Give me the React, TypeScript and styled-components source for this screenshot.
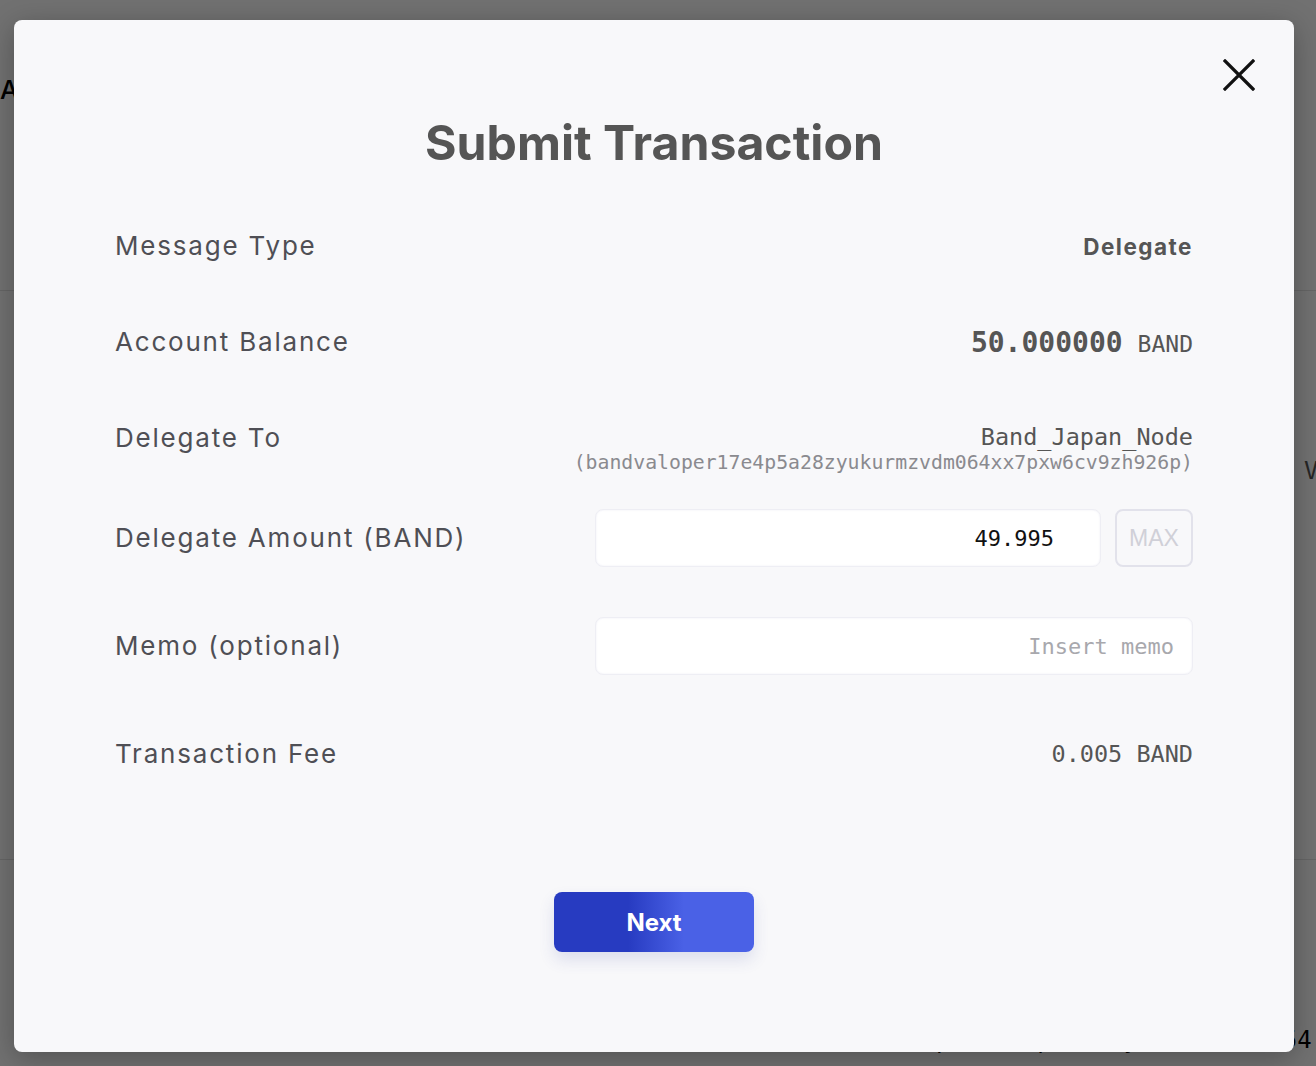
import React from "react";
import styled, { createGlobalStyle } from "styled-components";

const GlobalStyle = createGlobalStyle`
  html, body {
    margin: 0;
    padding: 0;
  }
  body {
    font-family: Inter, "Noto Sans", sans-serif;
    background: #ffffff;
    overflow: hidden;
  }
  * {
    box-sizing: border-box;
  }
`;

interface RowProps {
  $h: number;
  $top?: boolean;
}

interface SectionProps {
  $h: number;
}

function CloseIcon(): JSX.Element {
  return (
    <svg width="32" height="32" viewBox="0 0 32 32" fill="none">
      <path
        d="M2 2L30 30M30 2L2 30"
        stroke="#111111"
        strokeWidth="3.2"
        strokeLinecap="square"
      />
    </svg>
  );
}

function App(): JSX.Element {
  return (
    <>
      <GlobalStyle />
      <Page>
        <PageHeading>Accounts</PageHeading>
        <PageSection $h={569}>
          <PageLine>Voting Power</PageLine>
        </PageSection>
        <PageSection $h={260}>
          <PageFooterLine>{"p      p     y          54"}</PageFooterLine>
        </PageSection>

        <Overlay>
          <Modal>
            <CloseButton aria-label="Close">
              <CloseIcon />
            </CloseButton>
            <Title>Submit Transaction</Title>

            <Rows>
              <Row $h={96}>
                <Label>Message Type</Label>
                <TypeValue>Delegate</TypeValue>
              </Row>

              <Row $h={96}>
                <Label>Account Balance</Label>
                <Balance>
                  <Amount>50.000000</Amount>
                  <Unit>BAND</Unit>
                </Balance>
              </Row>

              <Row $h={100} $top>
                <Label>Delegate To</Label>
                <Validator>
                  <ValidatorName>Band_Japan_Node</ValidatorName>
                  <ValidatorAddress>
                    (bandvaloper17e4p5a28zyukurmzvdm064xx7pxw6cv9zh926p)
                  </ValidatorAddress>
                </Validator>
              </Row>

              <Row $h={96}>
                <Label>Delegate Amount (BAND)</Label>
                <InputGroup>
                  <AmountInput defaultValue="49.995" />
                  <MaxButton>MAX</MaxButton>
                </InputGroup>
              </Row>

              <Row $h={120}>
                <Label>Memo (optional)</Label>
                <MemoInput placeholder="Insert memo" />
              </Row>

              <Row $h={96}>
                <Label>Transaction Fee</Label>
                <Fee>0.005 BAND</Fee>
              </Row>
            </Rows>

            <Footer>
              <NextButton>Next</NextButton>
            </Footer>
          </Modal>
        </Overlay>
      </Page>
    </>
  );
}

export default App;

const Page = styled.div`
  position: relative;
  width: 1316px;
  height: 1066px;
  overflow: hidden;
  background: #ffffff;
  padding-top: 74px;
`;

const PageHeading = styled.h1`
  margin: 0 0 185px;
  height: 31px;
  font-family: Inter, sans-serif;
  font-size: 26px;
  line-height: 31px;
  font-weight: 500;
  color: #000000;
  white-space: nowrap;
`;

const PageSection = styled.div<SectionProps>`
  height: ${(p) => p.$h}px;
  border-top: 1px solid #e4e4e4;
  padding-top: 166px;
`;

const PageLine = styled.div`
  padding-left: 1304px;
  font-family: "DejaVu Sans Mono", monospace;
  font-size: 24px;
  line-height: 28px;
  color: #555555;
  white-space: nowrap;
`;

const PageFooterLine = styled.div`
  padding-left: 936px;
  font-family: "DejaVu Sans Mono", monospace;
  font-size: 24px;
  line-height: 28px;
  color: #000000;
  white-space: pre;
`;

const Overlay = styled.div`
  position: absolute;
  inset: 0;
  display: flex;
  padding: 20px 22px 14px 14px;
  background: rgba(0, 0, 0, 0.555);
`;

const Modal = styled.div`
  position: relative;
  flex: 1;
  display: flex;
  flex-direction: column;
  padding: 0 101px;
  background: #f8f8fa;
  border-radius: 8px;
  box-shadow: 0 6px 28px rgba(0, 0, 0, 0.28);
`;

const CloseButton = styled.button`
  position: absolute;
  top: 39px;
  right: 39px;
  width: 32px;
  height: 32px;
  padding: 0;
  border: none;
  background: transparent;
  display: flex;
  align-items: center;
  justify-content: center;
  cursor: pointer;
`;

const Title = styled.h2`
  margin: 94px 0 0;
  font-family: Inter, sans-serif;
  font-size: 48.2px;
  line-height: 58px;
  font-weight: 700;
  text-align: center;
  color: #555555;
`;

const Rows = styled.div`
  display: flex;
  flex-direction: column;
  margin-top: 26px;
`;

const Row = styled.div<RowProps>`
  display: flex;
  justify-content: space-between;
  align-items: ${(p) => (p.$top ? "flex-start" : "center")};
  height: ${(p) => p.$h}px;
  padding-top: ${(p) => (p.$top ? "32px" : "0")};
`;

const Label = styled.div`
  font-family: Inter, sans-serif;
  font-size: 26px;
  line-height: 32px;
  letter-spacing: 1.8px;
  color: #4f4f55;
  white-space: nowrap;
`;

const TypeValue = styled.div`
  font-family: Inter, sans-serif;
  font-size: 22.5px;
  font-weight: 700;
  letter-spacing: 1.5px;
  color: #555555;
`;

const Balance = styled.div`
  display: flex;
  align-items: baseline;
  gap: 15px;
`;

const Amount = styled.span`
  font-family: "DejaVu Sans Mono", monospace;
  font-size: 28px;
  font-weight: 700;
  color: #555555;
`;

const Unit = styled.span`
  font-family: "DejaVu Sans Mono", monospace;
  font-size: 23px;
  color: #555555;
`;

const Validator = styled.div`
  display: flex;
  flex-direction: column;
  align-items: flex-end;
`;

const ValidatorName = styled.div`
  font-family: "DejaVu Sans Mono", monospace;
  font-size: 23.5px;
  line-height: 30px;
  color: #555555;
`;

const ValidatorAddress = styled.div`
  font-family: "DejaVu Sans Mono", monospace;
  font-size: 19.8px;
  line-height: 22px;
  color: #8a8a8f;
  white-space: nowrap;
`;

const InputGroup = styled.div`
  display: flex;
  gap: 14px;
  width: 598px;
`;

const FieldBase = styled.input`
  height: 58px;
  border: 1px solid #eeeef4;
  border-radius: 8px;
  background: #ffffff;
  box-shadow: inset 0 0 2px rgba(220, 220, 235, 0.6);
  font-family: "DejaVu Sans Mono", monospace;
  font-size: 22px;
  text-align: right;
  outline: none;
`;

const AmountInput = styled(FieldBase)`
  flex: 1;
  padding: 0 46px 0 16px;
  color: #111111;
`;

const MemoInput = styled(FieldBase)`
  width: 598px;
  padding: 0 18px 0 16px;
  color: #111111;
  &::placeholder {
    color: #a8a8ad;
  }
`;

const MaxButton = styled.button`
  width: 78px;
  height: 58px;
  border: 2px solid #e2e2eb;
  border-radius: 8px;
  background: transparent;
  font-family: "Liberation Sans", sans-serif;
  font-size: 23px;
  color: #d0d0d8;
  padding: 0;
`;

const Fee = styled.div`
  font-family: "DejaVu Sans Mono", monospace;
  font-size: 23.5px;
  color: #555555;
  white-space: nowrap;
`;

const Footer = styled.div`
  display: flex;
  justify-content: center;
  margin-top: 90px;
`;

const NextButton = styled.button`
  width: 200px;
  height: 60px;
  border: none;
  border-radius: 8px;
  background: linear-gradient(90deg, #273bc1 37%, #4a61e6 65%);
  box-shadow: 0 8px 16px rgba(60, 70, 160, 0.14);
  font-family: Inter, sans-serif;
  font-size: 24px;
  font-weight: 700;
  color: #ffffff;
  cursor: pointer;
`;
